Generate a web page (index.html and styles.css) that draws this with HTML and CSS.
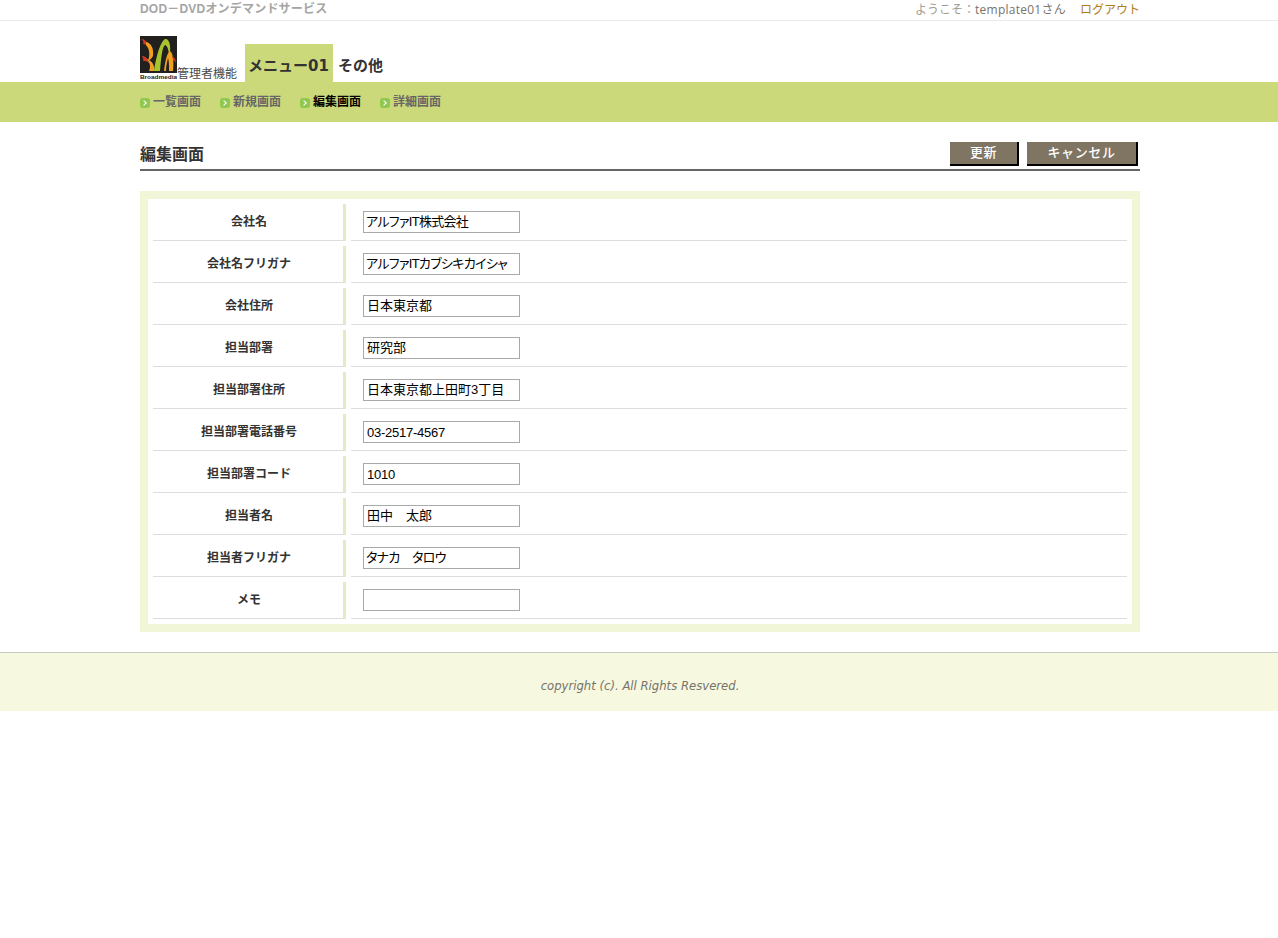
FILE: index.html
```html
<!DOCTYPE html>
<html lang="ja">
<head>
    <title>編集画面</title>
    <link rel="stylesheet" href="styles.css">
</head>
<body>

    <div class="topbar">
        <div class="wrap topbar-in">
            <span class="service">DOD－DVDオンデマンドサービス</span>
            <span class="welcome">ようこそ：<span class="user">template01さん</span><a class="logout" href="#">ログアウト</a></span>
        </div>
    </div>

    <header class="wrap head">
        <svg class="logo" width="37" height="44" viewBox="0 0 37 44">
            <rect width="37" height="37" fill="#221f1f"/>
            <path d="M1 3 C5 3 8 6 8 11 C7 9 5 8 3 8 C4 6 3 4 1 3Z" fill="#d23a26"/>
            <path d="M6 6 C11 7 14 12 13 20 C12 22 10 24 8 25 C10 20 10 13 6 9Z" fill="#f0a020"/>
            <path d="M2 20 C5 20 8 22 9 27 C7 25 5 25 3 25 C4 24 3 22 2 20Z" fill="#d23a26"/>
            <path d="M7 23 C12 25 15 29 14 35 L9 35 C11 31 10 27 7 23Z" fill="#f0a020"/>
            <path d="M14 35 C16 22 20 6 25 3 C29 2 32 10 29 20 C29 14 27 9 25 9 C22 11 21 24 20 35Z" fill="#a8c42c"/>
            <path d="M24 35 C25 25 27 17 30 15 C33 17 34 25 33 35 L29 35 C29 29 29 25 28 22 C27 26 26 31 26 35Z" fill="#f0a020"/>
            <path d="M32 20 C34 21 36 23 36 27 C35 25 34 24 33 24Z" fill="#d23a26"/>
            <text x="0" y="43" class="logo-text" textLength="37" lengthAdjust="spacingAndGlyphs">Broadmedia</text>
        </svg>
        <span class="admin">管理者機能</span>
        <nav class="tabs">
            <a class="tab active" href="#">メニュー01</a>
            <a class="tab" href="#">その他</a>
        </nav>
    </header>

    <div class="subnav">
        <ul class="wrap subnav-list">
            <li><a href="#">一覧画面</a></li>
            <li><a href="#">新規画面</a></li>
            <li class="current"><a href="#">編集画面</a></li>
            <li><a href="#">詳細画面</a></li>
        </ul>
    </div>

    <main class="wrap">
        <div class="title-row">
            <h1>編集画面</h1>
            <div class="buttons">
                <button class="btn btn-update">更新</button>
                <button class="btn btn-cancel">キャンセル</button>
            </div>
        </div>

        <div class="panel">
            <table class="form">
                <tr><th>会社名</th><td><input class="kana" type="text" value="アルファIT株式会社"></td></tr>
                <tr><th>会社名フリガナ</th><td><input class="kana" type="text" value="アルファITカブシキカイシャ"></td></tr>
                <tr><th>会社住所</th><td><input type="text" value="日本東京都"></td></tr>
                <tr><th>担当部署</th><td><input type="text" value="研究部"></td></tr>
                <tr><th>担当部署住所</th><td><input type="text" value="日本東京都上田町3丁目"></td></tr>
                <tr><th>担当部署電話番号</th><td><input class="num" type="text" value="03-2517-4567"></td></tr>
                <tr><th>担当部署コード</th><td><input class="num" type="text" value="1010"></td></tr>
                <tr><th>担当者名</th><td><input type="text" value="田中　太郎"></td></tr>
                <tr><th>担当者フリガナ</th><td><input class="kana" type="text" value="タナカ　タロウ"></td></tr>
                <tr><th>メモ</th><td><input type="text" value=""></td></tr>
            </table>
        </div>
    </main>

    <footer>
        <p>copyright (c). All Rights Resvered.</p>
    </footer>

</body>
</html>
```

FILE: styles.css
```css
body {
    margin: 0;
    font-family: "Open Sans", "Noto Sans CJK JP", sans-serif;
    font-size: 12px;
    color: #333;
    background: #fff;
}

a {
    text-decoration: none;
}

.wrap {
    width: 1000px;
    margin-left: 140px;
}

.topbar {
    height: 20px;
    border-bottom: 1px solid #eaeaea;
}

.topbar-in {
    display: flex;
    justify-content: space-between;
    line-height: 19px;
}

.service {
    font-family: "Liberation Sans", "Noto Sans CJK JP", sans-serif;
    font-weight: bold;
    font-size: 12px;
    letter-spacing: 0.2px;
    color: #a5a5a5;
}

.welcome {
    font-size: 12px;
    color: #a09a90;
}

.user {
    color: #77736a;
    letter-spacing: 0.25px;
}

.logout {
    margin-left: 14px;
    color: #b07c1c;
}

.head {
    height: 61px;
    display: flex;
    align-items: flex-end;
}

.logo {
    display: block;
    margin-bottom: 2px;
}

.logo-text {
    font-family: "Liberation Sans", sans-serif;
    font-size: 6px;
    font-weight: bold;
    fill: #222;
}

.admin {
    font-size: 12px;
    line-height: 15px;
    margin-bottom: 1px;
    color: #4a4a4a;
}

.tabs {
    display: flex;
    margin-left: 8px;
}

.tab {
    height: 38px;
    line-height: 44px;
    padding: 0 4px 0 3px;
    font-family: "DejaVu Sans", "Noto Sans CJK JP", sans-serif;
    font-weight: bold;
    font-size: 15px;
    color: #333;
    margin-right: 1px;
}

.tab + .tab {
    padding-left: 4px;
}

.tab.active {
    background: #ccd97a;
}

.subnav {
    height: 40px;
    background: #ccd97a;
}

.subnav-list {
    display: flex;
    list-style: none;
    padding: 0;
    margin-top: 0;
    margin-bottom: 0;
    height: 40px;
    align-items: center;
}

.subnav-list li {
    width: 80px;
    padding-left: 13px;
    box-sizing: border-box;
    position: relative;
    font-weight: bold;
    line-height: 40px;
}

.subnav-list li::before {
    content: "";
    position: absolute;
    left: 0;
    top: 16px;
    width: 10px;
    height: 10px;
    border-radius: 3px;
    background: #8fc84e;
}

.subnav-list li::after {
    content: "";
    position: absolute;
    left: 2px;
    top: 19px;
    width: 3px;
    height: 3px;
    border-top: 1.5px solid #fff;
    border-right: 1.5px solid #fff;
    transform: rotate(45deg);
}

.subnav-list a {
    color: #666;
}

.subnav-list .current a {
    color: #000;
}

.title-row {
    display: flex;
    justify-content: space-between;
    margin-top: 20px;
    height: 27px;
    border-bottom: 2px solid #666;
}

h1 {
    margin: 0;
    font-size: 16px;
    line-height: 24px;
    font-weight: bold;
    color: #333;
}

.buttons {
    display: flex;
    gap: 8px;
    padding-right: 2px;
    height: 24px;
}

.btn {
    height: 24px;
    padding: 0 0 4px;
    border: none;
    border-right: 2px solid #000;
    border-bottom: 2px solid #000;
    background: #7f7562;
    color: #fff;
    font-family: "Noto Sans CJK JP", sans-serif;
    font-size: 13px;
    font-weight: 500;
    letter-spacing: 0.6px;
}

.btn-update {
    width: 69px;
}

.btn-cancel {
    width: 111px;
}

.panel {
    margin-top: 20px;
    border: 8px solid #f2f6d8;
}

.form {
    width: 984px;
    border-collapse: separate;
    border-spacing: 5px;
}

.form th,
.form td {
    height: 36px;
    padding: 0;
    border-bottom: 1px solid #ddd;
}

.form th {
    width: 188px;
    padding: 0 0 2px 2px;
    height: 34px;
    border-right: 3px solid #e5e9c4;
    font-size: 12px;
    color: #333;
    text-align: center;
}

.form td {
    padding-left: 12px;
}

.form input {
    display: block;
    width: 157px;
    height: 22px;
    box-sizing: border-box;
    border: 1px solid #aaa;
    padding: 0 3px 4px;
    font-family: "Liberation Sans", "Noto Sans CJK JP", sans-serif;
    font-size: 13px;
    line-height: 15px;
    font-feature-settings: "palt";
    color: #000;
}

.form input.kana {
    padding-left: 2px;
    letter-spacing: -0.7px;
}

.form input.num {
    padding-bottom: 0;
    letter-spacing: -0.25px;
}

footer {
    margin-top: 20px;
    height: 58px;
    background: #f6f8e0;
    border-top: 1px solid #c8c8c8;
}

footer p {
    margin: 0;
    padding-left: 2px;
    text-align: center;
    line-height: 66px;
    font-family: "DejaVu Sans", sans-serif;
    font-style: italic;
    font-size: 11.65px;
    color: #77736a;
}
```
